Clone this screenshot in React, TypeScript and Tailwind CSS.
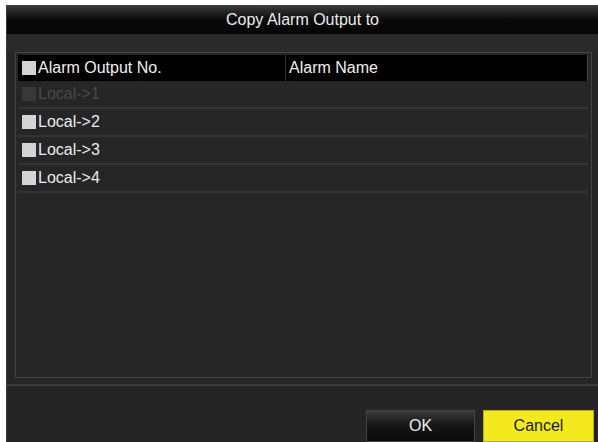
const rows = [
  { label: "Local->1", disabled: true },
  { label: "Local->2", disabled: false },
  { label: "Local->3", disabled: false },
  { label: "Local->4", disabled: false },
];

function Box({ disabled }: { disabled?: boolean }) {
  return (
    <span
      className={
        "inline-block w-[14px] h-[14px] mr-[2px] shrink-0 " +
        (disabled ? "bg-[#383838]" : "bg-[#d4d4d4]")
      }
    />
  );
}

export default function App() {
  return (
    <div
      className="w-[598px] h-[442px] bg-white pl-[6px] pt-[5px] overflow-hidden"
      style={{ fontFamily: '"Liberation Sans", Arial, sans-serif' }}
    >
      <div className="flex flex-col h-full bg-[#262626] border-l border-t border-[#3a3a3a]">
        {/* title */}
        <div className="h-[28px] flex items-center justify-center bg-gradient-to-b from-[#3a3a3a] via-[#0a0a0a] to-[#050505] text-[16px] text-[#ececec]">
          Copy Alarm Output to
        </div>
        <div className="h-[18px] bg-[#2a2a2a]" />

        {/* table */}
        <div className="ml-[8px] mr-[6px] h-[327px] border border-[#454545] p-[2px] pb-0 pr-[3px]">
          <div className="h-[26px] grid grid-cols-[268px_1fr] bg-black text-[16px] text-[#f0f0f0]">
            <div className="flex items-center pl-[4px] border-r border-[#333]">
              <Box />
              Alarm Output No.
            </div>
            <div className="flex items-center pl-[3px] border-r border-[#444]">Alarm Name</div>
          </div>
          {rows.map((r) => (
            <div
              key={r.label}
              className="h-[28px] grid grid-cols-[268px_1fr] border-b-2 border-[#333] text-[16px]"
            >
              <div
                className={
                  "flex items-center pl-[4px] " +
                  (r.disabled ? "text-[#4a4a4a]" : "text-[#ececec]")
                }
              >
                <Box disabled={r.disabled} />
                {r.label}
              </div>
              <div />
            </div>
          ))}
        </div>

        {/* footer */}
        <div className="mt-[6px] h-[2px] bg-[#3a3a3a]" />
        <div className="flex-1 bg-[#252525] flex justify-end items-start pt-[24px] pr-[4px] gap-[8px]">
          <button className="w-[109px] h-[32px] bg-gradient-to-b from-[#3a3a3a] via-[#151515] to-[#0a0a0a] border border-[#444] text-[16px] text-[#ececec]">
            OK
          </button>
          <button className="w-[111px] h-[32px] bg-[#f2ea1c] border border-[#b8b000] text-[16px] text-[#1a1a1a]">
            Cancel
          </button>
        </div>
      </div>
    </div>
  );
}
